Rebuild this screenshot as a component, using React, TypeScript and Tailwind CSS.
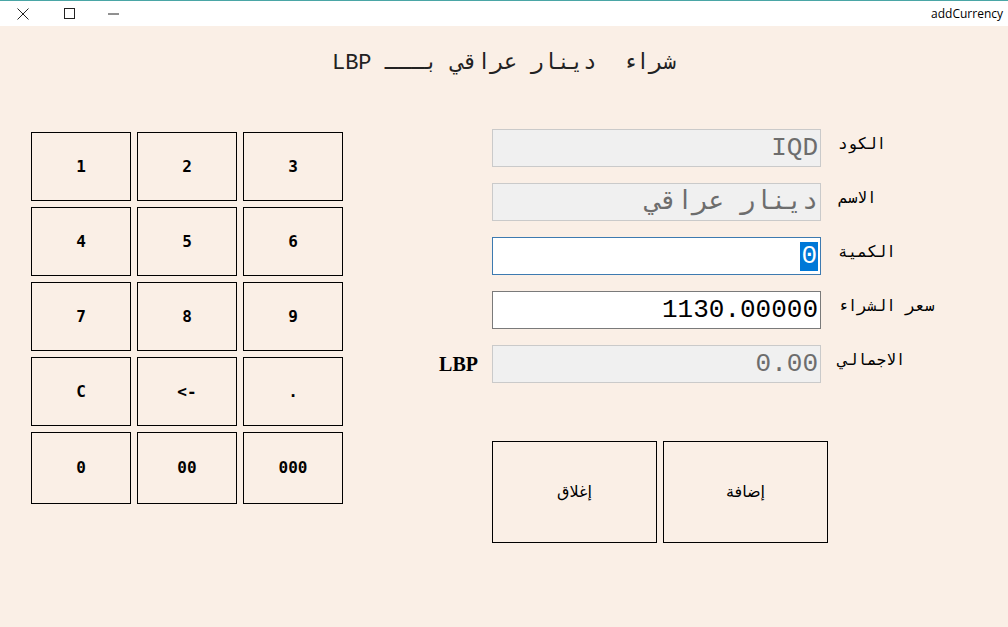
import React from "react"

const keys = ["1", "2", "3", "4", "5", "6", "7", "8", "9", "C", "<-", ".", "0", "00", "000"]

function Field({ label, children, box, lead }: { label: string; children: React.ReactNode; box: string; lead?: React.ReactNode }) {
    return (
        <div className="flex items-center h-[38px]">
            <div className="w-[54px] pr-[14px] text-right">{lead}</div>
            <div className={`w-[329px] h-[38px] flex items-center justify-end pr-[2px] overflow-hidden text-[26px] font-['Liberation_Mono','DejaVu_Sans_Mono',monospace] ${box}`}>
                {children}
            </div>
            <div dir="rtl" className="ml-[17px] -mt-[8px] text-[16px] text-black font-['DejaVu_Sans_Mono','Liberation_Mono',monospace]">
                {label}
            </div>
        </div>
    )
}

export default function App() {
    return (
        <div className="w-[1008px] h-[627px] bg-[#faefe6] flex flex-col overflow-hidden">
            {/* title bar */}
            <div className="h-[26px] bg-white border-t border-[#4aa6a6] flex items-center shrink-0">
                <svg className="ml-[17px]" width="12" height="12" viewBox="0 0 12 12">
                    <path d="M0.5 0.5L11.5 11.5M11.5 0.5L0.5 11.5" stroke="#222" strokeWidth="1" />
                </svg>
                <svg className="ml-[35px]" width="11" height="11" viewBox="0 0 11 11">
                    <rect x="0.5" y="0.5" width="10" height="10" fill="none" stroke="#222" strokeWidth="1" />
                </svg>
                <svg className="ml-[33px]" width="11" height="2" viewBox="0 0 11 2">
                    <path d="M0 1H11" stroke="#222" strokeWidth="1" />
                </svg>
                <div className="ml-auto mr-[5px] text-[12px] text-black font-['Open_Sans','Noto_Sans',sans-serif]">addCurrency</div>
            </div>

            <div className="pt-[17px]">
                <div className="h-[40px] flex items-center justify-center">
                    <span dir="rtl" className="text-[22px] text-[#222] font-['Liberation_Mono','DejaVu_Sans_Mono',monospace] whitespace-pre">
                        شراء  دينار عراقي بـــ LBP
                    </span>
                </div>

                <div className="flex mt-[46px]">
                    {/* keypad */}
                    <div className="ml-[31px] mt-[3px] grid grid-cols-[100px_100px_100px] grid-rows-[69px_69px_69px_69px_72px] gap-[6px]">
                        {keys.map(k => (
                            <button key={k} className="border border-black bg-[#faefe6] text-[16px] font-bold text-black font-['DejaVu_Sans_Mono','Liberation_Mono',monospace]">
                                {k}
                            </button>
                        ))}
                    </div>

                    {/* form */}
                    <div className="ml-[95px] flex flex-col gap-[16px]">
                        <Field label="الكود" box="bg-[#f0f0f0] border border-[#cacaca] text-[#6d6d6d]">IQD</Field>
                        <Field label="الاسم" box="bg-[#f0f0f0] border border-[#cacaca] text-[#6d6d6d]">
                            <span dir="rtl">دينار عراقي</span>
                        </Field>
                        <Field label="الكمية" box="bg-white border border-[#3d7ab0] text-black">
                            <span className="bg-[#0078d7] text-white leading-[29px] px-[1px]">0</span>
                        </Field>
                        <Field label="سعر الشراء" box="bg-white border border-[#7a7a7a] text-black">1130.00000</Field>
                        <Field
                            label="الاجمالي"
                            box="bg-[#f0f0f0] border border-[#cacaca] text-[#6d6d6d]"
                            lead={<span className="text-[20px] font-bold text-black font-['Liberation_Serif',serif]">LBP</span>}
                        >
                            0.00
                        </Field>

                        <div className="flex gap-[6px] ml-[54px] mt-[42px]">
                            <button dir="rtl" className="w-[165px] h-[102px] border border-black bg-[#faefe6] text-[16px] text-black font-['DejaVu_Sans','Noto_Sans',sans-serif]">
                                إغلاق
                            </button>
                            <button dir="rtl" className="w-[165px] h-[102px] border border-black bg-[#faefe6] text-[16px] text-black font-['DejaVu_Sans','Noto_Sans',sans-serif]">
                                إضافة
                            </button>
                        </div>
                    </div>
                </div>
            </div>
        </div>
    )
}
